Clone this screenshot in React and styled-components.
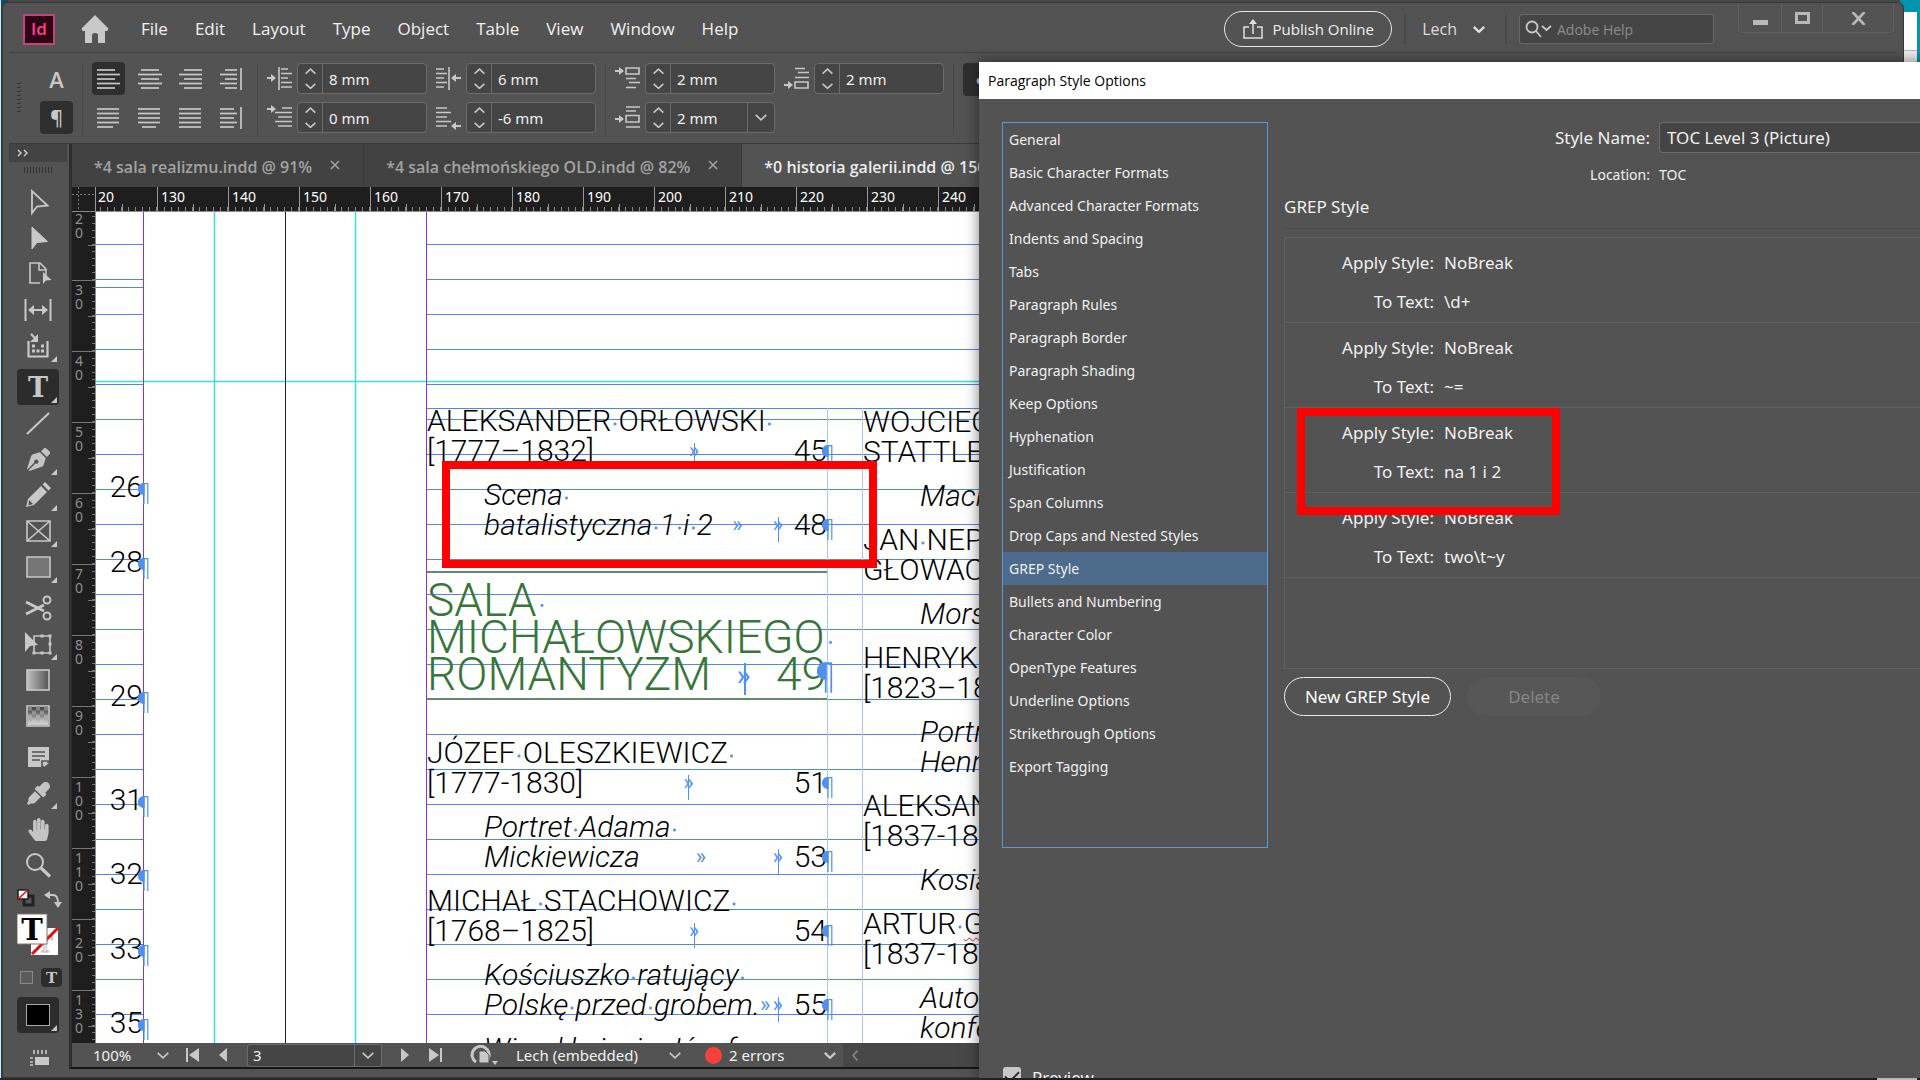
import React from "react";
import styled, { createGlobalStyle } from "styled-components";
import { FaEyeDropper, FaHandPaper, FaPenNib } from "react-icons/fa";

const GlobalStyle = createGlobalStyle`
  * {
    box-sizing: border-box;
  }

  body {
    margin: 0;
    overflow: hidden;
    background: #0e5a70;
    font-family: "Open Sans", "Noto Sans", sans-serif;
    color: #f0f0f0;
  }

  button,
  input {
    font: inherit;
    color: inherit;
    background: none;
    border: 0;
    padding: 0;
    margin: 0;
  }
`;

const Desktop = styled.div`
  position: relative;
  height: 100vh;
  display: flex;
  overflow: hidden;
  padding: 2px 16px 2px 2px;
  background: linear-gradient(90deg, transparent 8px, #484848 8px, #484848 calc(100% - 20px), transparent 0) 0 0 / 100% 2px no-repeat,
    linear-gradient(#2a2a2a, #2a2a2a) 0 100% / 100% 2px no-repeat,
    linear-gradient(90deg, #d8e4e8 1px, #14485c 1px, #14485c 50%, #0294ad 50%);
`;

// Strip of the window that sits behind the main one
const BackWindow = styled.div`
  position: absolute;
  top: 12px;
  right: 3px;
  width: 40px;
  bottom: 0;
  background: linear-gradient(#fff 38px, #bbb 38px, #bbb 39px, #eee 39px);
`;

const AppWindow = styled.div`
  position: relative;
  flex: 1;
  min-width: 0;
  display: flex;
  flex-direction: column;
  background: #535353;
  border: 1px solid #383838;
  border-radius: 6px 6px 0 0;
  padding: 0 6px;
`;

// ---- Title bar ----

const TitleBar = styled.header`
  height: 50px;
  flex-shrink: 0;
  display: flex;
  align-items: center;
  padding: 3px 0 0 14px;
  border-bottom: 1px solid #404040;
`;

const Logo = styled.div`
  width: 32px;
  height: 31px;
  border: 2px solid #c0457c;
  background: #2f0515;
  color: #ff3f94;
  font-weight: 600;
  font-size: 17px;
  line-height: 25px;
  text-align: center;
  margin-right: 26px;
`;

const Menu = styled.nav`
  display: flex;
  gap: 27px;
  margin-left: 32px;
  flex: 1;
`;

const MenuItem = styled.button`
  font-size: 17px;
  line-height: 24px;
`;

const PublishButton = styled.button`
  display: flex;
  align-items: center;
  justify-content: center;
  gap: 10px;
  width: 168px;
  height: 36px;
  border: 1px solid #e8e8e8;
  border-radius: 18px;
  font-size: 15px;
  white-space: nowrap;
`;

const BarDivider = styled.span`
  width: 2px;
  height: 30px;
  background: #4a4a4a;
  margin: 0 ${(p) => p.$after || 12}px 0 12px;
`;

const UserButton = styled.button`
  display: flex;
  align-items: center;
  gap: 16px;
  font-size: 16px;
  color: #dcdcdc;
  margin-right: 8px;
`;

const SearchBox = styled.label`
  display: flex;
  align-items: center;
  width: 195px;
  height: 30px;
  border: 1px solid #6a6a6a;
  border-radius: 3px;
  background: #454545;
  padding-left: 5px;
  gap: 4px;

  input {
    width: 140px;
    font-size: 14px;
  }

  input::placeholder {
    color: #8c8c8c;
  }
`;

const WindowButtons = styled.div`
  align-self: flex-start;
  display: flex;
  height: 29px;
  margin: -2px 3px 0 24px;
  border: 1px solid #5f5f5f;
  border-top: 0;
  border-radius: 0 0 4px 4px;
`;

const WindowButton = styled.button`
  width: ${(p) => p.$width}px;
  display: flex;
  align-items: center;
  justify-content: center;

  & + & {
    border-left: 1px solid #5f5f5f;
  }
`;

// ---- Control bar ----

const ControlBar = styled.div`
  height: 91px;
  flex-shrink: 0;
  display: flex;
  align-items: flex-start;
  padding: 10px 0 0 8px;
  border-bottom: 1px solid #3c3c3c;
`;

const Gripper = styled.span`
  width: 4px;
  height: 30px;
  margin: 20px 19px 0 0;
  background: repeating-linear-gradient(#333 0 1px, transparent 1px 4px);
`;

const ControlGrid = styled.div`
  display: grid;
  grid-template-columns: repeat(${(p) => p.$columns}, auto);
  grid-auto-rows: 31px;
  row-gap: 8px;
  column-gap: ${(p) => p.$gap || 0}px;
  align-items: center;
`;

const ControlDivider = styled.span`
  width: 1px;
  height: 72px;
  background: #4a4a4a;
  margin: 0 9px;
`;

const IconButton = styled.button`
  width: 33px;
  height: 33px;
  display: flex;
  align-items: center;
  justify-content: center;
  border-radius: 4px;
  font-size: ${(p) => p.$size || 22}px;
  font-weight: 600;
  line-height: 1;
  color: #c8c8c8;
  background: ${(p) => (p.$active ? "#2f2f2f" : "transparent")};
`;

const FieldGroup = styled.div`
  display: flex;
  align-items: center;
  gap: 5px;

  label {
    display: flex;
  }
`;

const FieldBox = styled.div`
  display: flex;
  width: 130px;
  height: 31px;
  border: 1px solid #6c6c6c;
  border-radius: 4px;
  background: #454545;

  input {
    flex: 1;
    min-width: 0;
    padding-left: 6px;
    font-size: 15px;
    font-family: "Noto Sans", sans-serif;
  }
`;

const Spinner = styled.div`
  width: 25px;
  display: flex;
  flex-direction: column;
  border-right: 1px solid #6c6c6c;

  button {
    flex: 1;
    display: flex;
    align-items: center;
    justify-content: center;
  }
`;

const DropButton = styled.button`
  width: 27px;
  display: flex;
  align-items: center;
  justify-content: center;
  border-left: 1px solid #6c6c6c;
`;

// ---- Work area ----

const WorkArea = styled.div`
  flex: 1;
  min-height: 0;
  display: flex;
`;

const ToolPanel = styled.aside`
  width: 58px;
  display: flex;
  flex-direction: column;
  align-items: center;
  color: #c4c4c4;
`;

const ToolPanelHeader = styled.div`
  width: 100%;
  height: 18px;
  padding-left: 8px;
  display: flex;
  align-items: center;
  background: #434343;
  flex-shrink: 0;
`;

const ToolGripper = styled.span`
  width: 28px;
  height: 6px;
  margin: 5px 0 11px;
  flex-shrink: 0;
  background: repeating-linear-gradient(90deg, #333 0 1px, transparent 1px 3px);
`;

const ToolGroup = styled.div`
  display: flex;
  flex-direction: column;
  margin-bottom: 5px;
`;

const Tool = styled.button`
  position: relative;
  width: 42px;
  height: 36px;
  flex-shrink: 0;
  display: flex;
  align-items: center;
  justify-content: center;
  border-radius: 4px;
  background: ${(p) => (p.$active ? "#2c2c2c" : "transparent")};

  &::after {
    content: "";
    display: ${(p) => (p.$more ? "block" : "none")};
    position: absolute;
    right: 2px;
    bottom: 2px;
    border: 3px solid #c8c8c8;
    border-top-color: transparent;
    border-left-color: transparent;
  }
`;

const SwatchButton = styled.button`
  display: flex;
  flex-shrink: 0;
  margin: 1px 0 0 3px;
`;

const FormatRow = styled.div`
  display: flex;
  align-items: center;
  gap: 8px;
  margin: 13px 0 10px 6px;
`;

const FormatButton = styled.button`
  width: ${(p) => (p.$active ? 21 : 13)}px;
  height: ${(p) => (p.$active ? 19 : 13)}px;
  border: ${(p) => (p.$active ? "0" : "1px solid #8a8a8a")};
  border-radius: ${(p) => (p.$active ? 4 : 0)}px;
  background: ${(p) => (p.$active ? "#2c2c2c" : "#5c5c5c")};
  font: bold 15px/18px "DejaVu Serif", serif;
`;

const ScreenMode = styled.button`
  display: flex;
  margin: 17px 0 0 3px;
`;

const BlackSwatch = styled.span`
  width: 24px;
  height: 22px;
  border: 1px solid #aaa;
  background: #000;
`;

const Document = styled.main`
  flex: 1;
  min-width: 0;
  display: flex;
  flex-direction: column;
  margin-left: 2px;
  margin-bottom: 8px;
  border-left: 3px solid #2e2e2e;
  border-bottom: 2px solid #161616;
`;

const TabStrip = styled.div`
  display: flex;
  height: 43px;
  flex-shrink: 0;
  background: #424242;
`;

const Tab = styled.div`
  display: flex;
  align-items: center;
  flex: ${(p) => (p.$active ? "1" : "none")};
  gap: 18px;
  padding: 2px 23px 0 22px;
  border-right: 1px solid #3a3a3a;
  background: ${(p) => (p.$active ? "#535353" : "#424242")};
  color: ${(p) => (p.$active ? "#ececec" : "#a2a2a2")};
  font-size: 16px;
  font-weight: 600;
  white-space: nowrap;

  button {
    display: flex;
    padding-bottom: 4px;
  }
`;

const RulerRow = styled.div`
  display: flex;
  height: 25px;
  flex-shrink: 0;
  background: #1e1e1e;
  border-bottom: 1px solid #8a8a8a;
`;

const RulerCorner = styled.div`
  width: 24px;
  flex-shrink: 0;
  background: linear-gradient(90deg, #777 50%, transparent 50%) 0 7px / 4px 1px repeat-x,
    linear-gradient(#777 50%, transparent 50%) 6px 0 / 1px 4px repeat-y;
  border-right: 1px solid #999;
`;

const RulerStrip = styled.div`
  flex: 1;
  min-width: 0;
  display: flex;
  overflow: hidden;
`;

const RulerMark = styled.span`
  width: 71px;
  flex-shrink: 0;
  border-left: 1px solid #999;
  padding-left: 3px;
  font: 14px/20px "Noto Sans", sans-serif;
  color: #fff;
  background: linear-gradient(90deg, transparent 6px, #888 6px) 0 100% / 7px 4px repeat-x,
    linear-gradient(#999, #999) 35px 100% / 1px 7px no-repeat;

  &:first-child {
    margin-left: -10px;
  }
`;

const CanvasRow = styled.div`
  flex: 1;
  min-height: 0;
  display: flex;
`;

const SideRuler = styled.div`
  width: 24px;
  flex-shrink: 0;
  overflow: hidden;
  background: #1e1e1e;
  border-right: 1px solid #8a8a8a;
`;

const SideMark = styled.div`
  height: 71px;
  border-top: 1px solid #777;
  padding: 2px 0 0 3px;
  font: 14px/14px "Noto Sans", sans-serif;
  color: #909090;
  background: linear-gradient(transparent 6px, #777 6px) 100% 0 / 3px 7px repeat-y,
    linear-gradient(#777, #777) 100% 35px / 7px 1px no-repeat;

  &:first-child {
    margin-top: -3px;
  }

  span {
    display: block;
    width: 9px;
  }
`;

// Pasteboard: guides, text frames and marks keep their place on the spread
const Canvas = styled.div`
  position: relative;
  flex: 1;
  min-width: 0;
  overflow: hidden;
  background: #fff;
  color: #000;
`;

const Guides = styled.svg`
  position: absolute;
  inset: 0;
  width: 100%;
  height: 100%;
`;

const TextFrame = styled.section`
  position: absolute;
  left: ${(p) => p.$left}px;
  top: ${(p) => p.$top}px;
  width: ${(p) => p.$width}px;
  display: flex;
  flex-direction: column;
  font-family: Roboto, sans-serif;
  font-weight: 300;
  font-size: 30px;
  line-height: 30px;
  white-space: pre;
`;

const Entry = styled.p`
  margin: 0 0 14px;
  padding-left: ${(p) => (p.$picture ? 57 : 0)}px;
  font-style: ${(p) => (p.$picture ? "italic" : "normal")};
`;

const Room = styled.h2`
  margin: 17px 0 38px;
  padding: 9px 0 5px;
  border: solid #5f8a6c;
  border-width: 2px 0;
  color: #37753b;
  font-size: 46px;
  font-weight: 300;
  line-height: 37px;
`;

const Line = styled.span`
  display: flex;
`;

const Dot = styled.span`
  background: radial-gradient(circle at 50% 60%, #5b93e6 1px, transparent 2px);
`;

const TabMark = styled.span`
  position: relative;
  min-width: 0;
  width: ${(p) => (p.$wide ? "auto" : "32px")};
  flex: ${(p) => (p.$wide ? "1" : "none")};
  text-align: center;
  color: #4f90f0;
  font-style: normal;
  font-weight: 400;
  font-size: ${(p) => (p.$large ? 30 : 22)}px;

  &::after {
    content: "";
    display: ${(p) => (p.$bar ? "block" : "none")};
    position: absolute;
    left: 50%;
    top: 7px;
    bottom: -2px;
    width: ${(p) => (p.$large ? 2 : 1)}px;
    background: #4f90f0;
  }
`;

const PageNumber = styled.span`
  position: relative;
  font-style: normal;

  svg {
    position: absolute;
    right: -6px;
    bottom: 0;
  }
`;

const FolioNumber = styled.p`
  margin: 0 0 ${(p) => p.$after}px;
  text-align: right;
`;

const Misspelt = styled.span`
  text-decoration: underline wavy #e02020 1px;
  text-underline-offset: 3px;
`;

const RedFrame = styled.div`
  position: absolute;
  left: ${(p) => p.$left}px;
  top: ${(p) => p.$top}px;
  width: ${(p) => p.$width}px;
  height: ${(p) => p.$height}px;
  border: 8px solid #fe0000;
  pointer-events: none;
`;

const StatusBar = styled.footer`
  height: 24px;
  flex-shrink: 0;
  display: flex;
  align-items: center;
  padding-left: 21px;
  font: 15px/24px "Noto Sans", sans-serif;

  button {
    display: flex;
    align-items: center;
    justify-content: center;
  }
`;

const StatusItem = styled.span`
  display: flex;
  align-items: center;
  gap: 7px;
  width: ${(p) => p.$width}px;
  white-space: nowrap;
`;

const StatusButton = styled.button`
  width: ${(p) => p.$width}px;
`;

const PageField = styled.div`
  display: flex;
  width: 135px;
  height: 23px;
  margin: 0 10px 0 18px;
  border: 1px solid #6c6c6c;
  border-radius: 3px;
  background: #454545;

  input {
    flex: 1;
    min-width: 0;
    padding-left: 5px;
  }
`;

const ErrorDot = styled.span`
  width: 17px;
  height: 17px;
  margin-left: 24px;
  border-radius: 50%;
  background: #f8403c;
`;

const StatusScroll = styled.div`
  flex: 1;
  height: 100%;
  display: flex;
  align-items: center;
  margin-left: 7px;
  padding-left: 9px;
  background: #484848;
`;

// ---- Dialog ----

const Dialog = styled.section`
  position: absolute;
  left: 979px;
  right: 0;
  top: 62px;
  bottom: 2px;
  display: flex;
  flex-direction: column;
  overflow: hidden;
  background: #535353;
  font-family: "Noto Sans", sans-serif;
`;

const DialogShadow = styled.div`
  position: absolute;
  left: 979px;
  right: -20px;
  top: 62px;
  bottom: 2px;
  box-shadow: 0 0 14px rgba(0, 0, 0, 0.5);
`;

const DialogTitle = styled.h1`
  margin: 0;
  height: 37px;
  flex-shrink: 0;
  padding-left: 9px;
  background: #fff;
  color: #000;
  font: 400 14px/38px "Open Sans", sans-serif;
`;

const DialogBody = styled.div`
  flex: 1;
  min-height: 0;
  display: flex;
  align-items: flex-start;
  gap: 16px;
  padding: 23px 0 0 23px;
`;

const CategoryList = styled.ul`
  width: 266px;
  height: 726px;
  flex-shrink: 0;
  margin: 0;
  padding: 0;
  list-style: none;
  border: 1px solid #5b9bd5;
`;

const Category = styled.button`
  display: block;
  width: 100%;
  height: 33px;
  padding-left: 6px;
  text-align: left;
  font-size: 14px;
  white-space: nowrap;
  background: ${(p) => (p.$active ? "#4d6b8a" : "transparent")};
`;

const StylePane = styled.div`
  flex: 1;
  min-width: 0;
  font-size: 17px;
`;

const StyleHead = styled.div`
  display: grid;
  grid-template-columns: 366px 1fr;
  column-gap: 9px;
  align-items: center;

  label {
    text-align: right;
  }
`;

const NameInput = styled.input`
  width: 100%;
  height: 31px;
  padding-left: 7px;
  border: 1px solid #6c6c6c;
  border-right: 0;
  border-radius: 4px 0 0 4px;
  background: #454545;
`;

const Small = styled.span`
  font-size: 14px;
  line-height: 43px;
  text-align: ${(p) => p.$align || "left"};
`;

const PaneTitle = styled.h2`
  margin: 0;
  height: 33px;
  font-size: 17px;
  font-weight: 400;
  line-height: 22px;
  border-bottom: 1px solid #4c4c4c;
`;

const GrepList = styled.div`
  height: 432px;
  margin: 8px 0;
  border: 1px solid #5f5f5f;
  border-right: 0;
`;

const GrepRow = styled.dl`
  display: grid;
  grid-template-columns: 149px 1fr;
  grid-auto-rows: 39px;
  column-gap: 10px;
  margin: 0;
  padding: 5px 0 1px;
  border-bottom: 1px solid #5f5f5f;
  line-height: 39px;

  dt {
    text-align: right;
  }

  dd {
    margin: 0;
  }
`;

const ButtonRow = styled.div`
  display: flex;
  gap: 16px;
`;

const PillButton = styled.button`
  width: ${(p) => p.$width}px;
  height: 39px;
  border-radius: 20px;
  border: 1px solid ${(p) => (p.disabled ? "#575757" : "#ececec")};
  background: ${(p) => (p.disabled ? "#575757" : "transparent")};
  color: ${(p) => (p.disabled ? "#858585" : "#fff")};
`;

const DialogFooter = styled.div`
  display: flex;
  align-items: flex-start;
  gap: 11px;
  height: 12px;
  padding-left: 24px;
  font-size: 17px;
  line-height: 24px;

  input {
    appearance: none;
    width: 18px;
    height: 18px;
    border-radius: 3px;
    background: #c8c8c8;
    flex-shrink: 0;
    display: flex;
    justify-content: center;
    margin-top: 1px;
  }

  input::after {
    content: "";
    width: 6px;
    height: 12px;
    margin-top: 1px;
    border: solid #333;
    border-width: 0 2px 2px 0;
    transform: rotate(45deg);
  }
`;

// ---- Icons ----

const Chevron = ({ up, left, size = 11, color = "#c8c8c8", width = 1.4 }) => (
  <svg
    width={left ? size / 2 + 1 : size}
    height={left ? size : size / 2 + 1}
    viewBox={left ? "0 0 6 10" : "0 0 10 6"}
    fill="none"
    stroke={color}
    strokeWidth={width}
  >
    <path d={left ? "M5 .5L1 5l4 4.500" : up ? "M.5 5.200L5 1l4.500 4.200" : "M.5 .8L5 5l4.500-4.200"} />
  </svg>
);

const Cross = ({ size = 10 }) => (
  <svg width={size} height={size} viewBox="0 0 10 10" stroke="currentColor" strokeWidth="1.6">
    <path d="M1 1l8 8M9 1L1 9" />
  </svg>
);

// Each pair is the start and end of one stroke, top to bottom
const lines = {
  left: [[0, 18], [0, 23], [0, 18], [0, 23], [0, 18]],
  center: [[3, 21], [0, 24], [3, 21], [0, 24], [3, 21]],
  right: [[5, 23], [0, 23], [5, 23], [0, 23], [5, 23]],
  spine: [[5, 17], [0, 17], [5, 17], [0, 17], [5, 17]],
  justLeft: [[0, 22], [0, 22], [0, 22], [0, 22], [0, 16]],
  justCenter: [[0, 22], [0, 22], [0, 22], [0, 22], [4, 18]],
  justAll: [[0, 22], [0, 22], [0, 22], [0, 22], [0, 22]],
  awaySpine: [[0, 14], [0, 17], [0, 14], [0, 17], [0, 14]],
};

const AlignIcon = ({ kind }) => (
  <svg width="24" height="24" viewBox="0 0 24 24" stroke="#c8c8c8" strokeWidth="1.7">
    {lines[kind].map(([a, b], i) => (
      <path key={i} d={`M${a} ${3 + i * 4.5}H${b}`} />
    ))}
    {kind.toLowerCase().includes("spine") && <path d="M21 1v22" />}
  </svg>
);

// Whether the small arrow points left, and the height it sits at
const arrows = {
  left: [0, 12],
  right: [1, 12],
  first: [0, 4],
  last: [1, 21],
  before: [0, 5],
  after: [0, 19],
  between: [0, 14],
};

const indentPaths = {
  left: "M12 1v23M14 3h7M14 7.500h11M14 12h7M14 16.500h11M14 21h11",
  right: "M13 1v23M0 3h8M0 7.500h11M0 12h8M0 16.500h11M0 21h8",
  first: "M15 3h10M8 7.500h17M11 12h14M8 16.500h17M11 21h14",
  last: "M0 3h11M0 7.500h15M0 12h11M0 16.500h15M0 21h11",
  before: "M11 2h13v6H11zM11 12.500h10M14 16.500h11M11 21.500h10",
  after: "M11 16h13v6H11zM11 2.500h10M14 6.500h11M11 11.500h14",
  between: "M11 10.500h13v6.500H11zM11 2h14M11 6h10M11 22h14",
};

const IndentIcon = ({ kind }) => {
  const [flip, y] = arrows[kind];
  return (
    <svg width="25" height="25" viewBox="0 0 25 25" fill="none" stroke="#c8c8c8" strokeWidth="1.6">
      <path d={indentPaths[kind]} />
      <path d={flip ? `M25 ${y}h-5` : `M0 ${y}h5`} strokeWidth="2" />
      <path d={flip ? `M20 ${y - 4}l-5 4 5 4z` : `M4 ${y - 4}l5 4-5 4z`} fill="#c8c8c8" stroke="none" />
    </svg>
  );
};

const Stroke = ({ d, fill = "none", width = 2, children }) => (
  <svg width="30" height="28" viewBox="0 0 30 28" fill={fill} stroke="#c8c8c8" strokeWidth={width}>
    {d && <path d={d} />}
    {children}
  </svg>
);

const tools = [
  [
    { name: "Selection", icon: <Stroke d="M9 3v22l5-6.500 10.500-1z" width="1.8" /> },
    { name: "Direct Selection", icon: <Stroke d="M9 3v22l5-6.500 10.500-1z" fill="#c8c8c8" width="1" /> },
    {
      name: "Page",
      icon: (
        <Stroke d="M17 23H7V3h10l6 6v6M16 3v7h7" width="1.6">
          <path d="M20 12v12l3-3.500 5.500-.5z" fill="#c8c8c8" stroke="none" />
        </Stroke>
      ),
    },
    {
      name: "Gap",
      icon: (
        <Stroke d="M2.500 3v22M27.500 3v22M7 14h16">
          <path d="M5 14l6-5v10zM25 14l-6-5v10z" fill="#c8c8c8" stroke="none" />
        </Stroke>
      ),
    },
    {
      name: "Content Collector",
      more: true,
      icon: (
        <Stroke d="M5.500 9v15.500h19V9M8 2l5 5" width="2.2">
          <path d="M15 2v8H7z" fill="#c8c8c8" stroke="none" />
          <path d="M9 14h3M18 14h3M9 19h3M13.500 19h3M18 19h3" strokeWidth="3" />
        </Stroke>
      ),
    },
  ],
  [
    {
      name: "Type",
      more: true,
      active: true,
      icon: (
        <Stroke>
          <text x="15" y="24" textAnchor="middle" fill="#c8c8c8" stroke="none" fontFamily="DejaVu Serif" fontWeight="bold" fontSize="27">
            T
          </text>
        </Stroke>
      ),
    },
    { name: "Line", icon: <Stroke d="M4 25L26 4" /> },
    { name: "Pen", more: true, icon: <FaPenNib size={23} /> },
    {
      name: "Pencil",
      more: true,
      icon: (
        <Stroke>
          <path d="M3 26l2-8L18 5l6 6-13 13zM19.500 3.500l2.500-2.500 6 6-2.500 2.500z" fill="#c8c8c8" stroke="none" />
          <path d="M6 19l4 4-4.500 1.500z" fill="#535353" stroke="none" />
        </Stroke>
      ),
    },
    { name: "Rectangle Frame", more: true, icon: <Stroke d="M4 4h23v20H4zM4 4l23 20M27 4L4 24" width="1.6" /> },
    { name: "Rectangle", more: true, icon: <Stroke d="M4 4h23v20H4z" fill="#767676" width="1.6" /> },
  ],
  [
    {
      name: "Scissors",
      icon: (
        <Stroke d="M3 8l18 9M3 20l18-9" width="2.600">
          <circle cx="24" cy="6" r="3.500" strokeWidth="2" />
          <circle cx="24" cy="22" r="3.500" strokeWidth="2" />
        </Stroke>
      ),
    },
    {
      name: "Free Transform",
      more: true,
      icon: (
        <Stroke d="M11 6h16v17H11z" width="1.6">
          <path d="M2 2v20l5-6 8-1z" fill="#c8c8c8" stroke="none" />
          <path d="M17.500 6h3M25.500 6h3M25.500 14h3M25.500 23h3M17.500 23h3M9.500 23h3" strokeWidth="3" />
        </Stroke>
      ),
    },
    {
      name: "Gradient Swatch",
      icon: (
        <Stroke>
          <defs>
            <linearGradient id="swatch">
              <stop offset="0" stopColor="#c0c0c0" />
              <stop offset="1" stopColor="#555" />
            </linearGradient>
          </defs>
          <rect x="4" y="4" width="22" height="20" fill="url(#swatch)" strokeWidth="1.6" />
        </Stroke>
      ),
    },
    {
      name: "Gradient Feather",
      icon: (
        <Stroke>
          <defs>
            <linearGradient id="feather" x2="0" y2="1">
              <stop offset="0.1" stopColor="#ccc" stopOpacity="0" />
              <stop offset="0.9" stopColor="#ccc" />
            </linearGradient>
          </defs>
          <rect x="4" y="4" width="22" height="20" fill="#484848" strokeWidth="1.6" />
          <path
            d="M5 6.500h4M13 6.500h4M21 6.500h4M9 10.500h4M17 10.500h4M5 14.500h4M13 14.500h4M21 14.500h4M9 18.500h4M17 18.500h4"
            stroke="#808080"
            strokeWidth="4"
          />
          <rect x="5" y="5" width="20" height="18" fill="url(#feather)" stroke="none" />
        </Stroke>
      ),
    },
  ],
  [
    {
      name: "Note",
      icon: (
        <Stroke>
          <path d="M5 4h21v14l-7 6H5z" fill="#c8c8c8" stroke="none" />
          <path d="M9 9h13M9 13h13M9 17h8M19 24v-6h7" stroke="#535353" strokeWidth="1.6" />
          <path d="M21 24v-4h5z" fill="#c8c8c8" stroke="none" />
        </Stroke>
      ),
    },
    {
      name: "Eyedropper",
      more: true,
      icon: <FaEyeDropper size={23} />,
    },
    { name: "Hand", icon: <FaHandPaper size={23} /> },
    {
      name: "Zoom",
      icon: (
        <Stroke>
          <circle cx="12" cy="11" r="8" />
          <path d="M18 17l9 8.500" strokeWidth="3.200" />
        </Stroke>
      ),
    },
  ],
];

const FillStroke = () => (
  <svg width="46" height="66" viewBox="0 0 46 66" fill="none">
    <rect x="7" y="7" width="9" height="9" stroke="#222" strokeWidth="3" />
    <rect x="1" y="1" width="10" height="9" fill="#fff" stroke="#222" strokeWidth="1.5" />
    <path d="M1 10L11 1" stroke="#e01010" strokeWidth="1.6" />
    <path d="M32 6h4q5 0 5 8" stroke="#c8c8c8" strokeWidth="1.8" />
    <path d="M27 6l6-4v8zM41 19l-4-6h8z" fill="#c8c8c8" />
    <rect x="14" y="39" width="27" height="27" fill="#fff" />
    <text x="28" y="63" textAnchor="middle" fontFamily="DejaVu Serif" fontSize="23" stroke="#bbb" strokeWidth="1">
      T
    </text>
    <path d="M15 65L41 39" stroke="#e01010" strokeWidth="3" />
    <rect x="0" y="25" width="30" height="30" fill="#fff" stroke="#777" />
    <text x="15" y="51" textAnchor="middle" fontFamily="DejaVu Serif" fontWeight="bold" fontSize="29" fill="#000">
      T
    </text>
  </svg>
);

const Pilcrow = ({ large }) => (
  <svg width={large ? 16 : 11} height={large ? 31 : 21} viewBox="0 0 11 21" fill="none" stroke="#4f90f0" strokeWidth="1.2">
    <path d="M6 .5A5.500 5.500 0 0 0 6 11.500z" fill="#4f90f0" />
    <path d="M5.500 .6H10.400M6 .5V21M9.800 .5V21" />
  </svg>
);

// ---- Data ----

const menus = ["File", "Edit", "Layout", "Type", "Object", "Table", "View", "Window", "Help"];

const topMarks = Array.from({ length: 26 }, (_, i) => 120 + i * 10);
const sideMarks = Array.from({ length: 12 }, (_, i) => 20 + i * 10);

const folios = [
  { page: 26, after: 45 },
  { page: 28, after: 104 },
  { page: 29, after: 74 },
  { page: 31, after: 44 },
  { page: 32, after: 45 },
  { page: 33, after: 44 },
  { page: 35, after: 0 },
];

const categories = [
  "General",
  "Basic Character Formats",
  "Advanced Character Formats",
  "Indents and Spacing",
  "Tabs",
  "Paragraph Rules",
  "Paragraph Border",
  "Paragraph Shading",
  "Keep Options",
  "Hyphenation",
  "Justification",
  "Span Columns",
  "Drop Caps and Nested Styles",
  "GREP Style",
  "Bullets and Numbering",
  "Character Color",
  "OpenType Features",
  "Underline Options",
  "Strikethrough Options",
  "Export Tagging",
];

const grepStyles = ["\\d+", "~=", "na 1 i 2", "two\\t~y"];

// ---- Components ----

// Text with the hidden space characters shown as dots
const Hidden = ({ children }) =>
  children.split(/( )/).map((part, i) => (part === " " ? <Dot key={i}> </Dot> : part));

const TocLine = ({ text, page, picture, large }) => (
  <Line>
    <span>
      <Hidden>{text}</Hidden>
    </span>
    {page && (
      <>
        <TabMark $wide $bar={!picture} $large={large}>
          »
        </TabMark>
        {picture && <TabMark $bar>»</TabMark>}
        <PageNumber>
          {page}
          <Pilcrow large={large} />
        </PageNumber>
      </>
    )}
  </Line>
);

const TocEntry = ({ first, second, page, picture }) => (
  <Entry $picture={picture}>
    <TocLine text={first} />
    {second && <TocLine text={second} page={page} picture={picture} />}
  </Entry>
);

const MeasureField = ({ id, label, icon, value, drop }) => (
  <FieldGroup>
    <label htmlFor={id} title={label}>
      <IndentIcon kind={icon} />
    </label>
    <FieldBox>
      <Spinner>
        <button aria-label={`Increase ${label}`}>
          <Chevron up />
        </button>
        <button aria-label={`Decrease ${label}`}>
          <Chevron />
        </button>
      </Spinner>
      <input id={id} aria-label={label} defaultValue={value} />
      {drop && (
        <DropButton aria-label={`${label} presets`}>
          <Chevron size={12} />
        </DropButton>
      )}
    </FieldBox>
  </FieldGroup>
);

const TopBar = () => (
  <TitleBar>
    <Logo>Id</Logo>
    <svg width="28" height="28" viewBox="0 0 28 28" fill="#c8c8c8">
      <path d="M14 0l13 13q1 3-2 3h-1v12h-7v-8q0-2-3-2t-3 2v8H4V16H3q-3 0-2-3z" />
    </svg>
    <Menu>
      {menus.map((item) => (
        <MenuItem key={item}>{item}</MenuItem>
      ))}
    </Menu>
    <PublishButton>
      <svg width="20" height="20" viewBox="0 0 20 20" fill="none" stroke="#e0e0e0" strokeWidth="1.5">
        <path d="M6 8H1v11h18V8h-5M10 15V3" />
        <path d="M10 0l4 5H6z" fill="#e0e0e0" stroke="none" />
      </svg>
      Publish Online
    </PublishButton>
    <BarDivider $after={16} />
    <UserButton>
      Lech
      <Chevron size={12} width={2} color="#e0e0e0" />
    </UserButton>
    <BarDivider />
    <SearchBox>
      <svg width="28" height="20" viewBox="0 0 28 20" fill="none" stroke="#c8c8c8" strokeWidth="1.8">
        <circle cx="7" cy="8" r="5.500" />
        <path d="M11 12l5 6M17 7l4.500 4L26 7" />
      </svg>
      <input placeholder="Adobe Help" aria-label="Adobe Help" />
    </SearchBox>
    <WindowButtons>
      <WindowButton $width={42} aria-label="Minimize">
        <svg width="15" height="14">
          <path d="M0 11.500h15" stroke="#b8b8b8" strokeWidth="5" />
        </svg>
      </WindowButton>
      <WindowButton $width={41} aria-label="Maximize">
        <svg width="15" height="12" fill="none" stroke="#b8b8b8" strokeWidth="3">
          <path d="M1.500 1.500h12v9h-12z" />
        </svg>
      </WindowButton>
      <WindowButton $width={71} aria-label="Close">
        <svg width="15" height="13" viewBox="0 0 15 13" stroke="#b8b8b8" strokeWidth="2.600">
          <path d="M1.500 0l12 13M13.500 0l-12 13" />
        </svg>
      </WindowButton>
    </WindowButtons>
  </TitleBar>
);

const Controls = () => (
  <ControlBar>
    <Gripper />
    <ControlGrid $columns={1}>
      <IconButton aria-label="Character">A</IconButton>
      <IconButton $active $size={20} aria-label="Paragraph">
        ¶
      </IconButton>
    </ControlGrid>
    <ControlDivider />
    <ControlGrid $columns={4} $gap={8}>
      {["left", "center", "right", "spine", "justLeft", "justCenter", "justAll", "awaySpine"].map((kind) => (
        <IconButton key={kind} $active={kind === "left"} aria-label={`Align ${kind}`}>
          <AlignIcon kind={kind} />
        </IconButton>
      ))}
    </ControlGrid>
    <ControlDivider />
    <ControlGrid $columns={2} $gap={9}>
      <MeasureField id="left" label="Left Indent" icon="left" value="8 mm" />
      <MeasureField id="right" label="Right Indent" icon="right" value="6 mm" />
      <MeasureField id="first" label="First Line Indent" icon="first" value="0 mm" />
      <MeasureField id="last" label="Last Line Indent" icon="last" value="-6 mm" />
    </ControlGrid>
    <ControlDivider />
    <ControlGrid $columns={2} $gap={9}>
      <MeasureField id="before" label="Space Before" icon="before" value="2 mm" />
      <MeasureField id="after" label="Space After" icon="after" value="2 mm" />
      <MeasureField id="between" label="Space Between" icon="between" value="2 mm" drop />
    </ControlGrid>
    <ControlDivider />
    <IconButton $active aria-label="Bulleted List">
      •
    </IconButton>
  </ControlBar>
);

const Tools = () => (
  <ToolPanel>
    <ToolPanelHeader>
      <svg width="12" height="8" viewBox="0 0 12 8" fill="none" stroke="#d0d0d0" strokeWidth="1.4">
        <path d="M1 1l3 3-3 3M7 1l3 3-3 3" />
      </svg>
    </ToolPanelHeader>
    <ToolGripper />
    {tools.map((group, i) => (
      <ToolGroup key={i}>
        {group.map((tool) => (
          <Tool key={tool.name} aria-label={tool.name} $active={tool.active} $more={tool.more}>
            {tool.icon}
          </Tool>
        ))}
      </ToolGroup>
    ))}
    <SwatchButton aria-label="Fill and Stroke">
      <FillStroke />
    </SwatchButton>
    <FormatRow>
      <FormatButton aria-label="Formatting affects container" />
      <FormatButton $active>T</FormatButton>
    </FormatRow>
    <Tool $active $more aria-label="Apply Color">
      <BlackSwatch />
    </Tool>
    <ScreenMode aria-label="Screen Mode">
      <svg width="20" height="16" viewBox="0 0 20 16" stroke="#c8c8c8" strokeWidth="1.6">
        <path d="M4 0v4M8 0v4M12 0v4M16 0v4M0 8h3M0 12h3M0 15h3" />
        <path d="M5 7h14v8H5z" fill="#c8c8c8" stroke="none" />
      </svg>
    </ScreenMode>
  </ToolPanel>
);

const Spread = () => (
  <Canvas>
    <Guides>
      <defs>
        <pattern id="baseline" width="35" height="35" y="32" patternUnits="userSpaceOnUse">
          <path d="M0 .5h35" stroke="#4f8ad8" />
        </pattern>
      </defs>
      <rect width="47" height="100%" fill="url(#baseline)" />
      <rect x="331" width="100%" height="100%" fill="url(#baseline)" />
      <g stroke="#4f8ad8">
        <path d="M0 75.500h47M331 196.500h1600" />
      </g>
      <path d="M731.500 196v900M766.500 196v900" stroke="#a9c8f0" />
      <path d="M0 169.500h1900" stroke="#35dfe0" strokeWidth="1.500" />
      <path d="M118.500 0v1000M259.500 0v1000" stroke="#35dfe0" strokeWidth="1.500" />
      <path d="M189.500 0v1000" stroke="#222" />
      <path d="M47.500 0v1000M330.500 0v1000" stroke="#8a35c8" />
    </Guides>

    <TextFrame $left={0} $top={260} $width={47}>
      {folios.map(({ page, after }) => (
        <FolioNumber key={page} $after={after}>
          <PageNumber>
            {page}
            <Pilcrow />
          </PageNumber>
        </FolioNumber>
      ))}
    </TextFrame>

    <TextFrame $left={331} $top={194} $width={400}>
      <TocEntry first="ALEKSANDER ORŁOWSKI " second="[1777–1832]" page="45" />
      <TocEntry picture first="Scena " second="batalistyczna 1 i 2" page="48" />
      <Room>
        <TocLine text="SALA " />
        <TocLine text="MICHAŁOWSKIEGO " />
        <TocLine large text="ROMANTYZM" page="49" />
      </Room>
      <TocEntry first="JÓZEF OLESZKIEWICZ " second="[1777-1830]" page="51" />
      <TocEntry picture first="Portret Adama " second="Mickiewicza" page="53" />
      <TocEntry first="MICHAŁ STACHOWICZ " second="[1768–1825]" page="54" />
      <TocEntry picture first="Kościuszko ratujący " second="Polskę przed grobem." page="55" />
      <TocEntry picture first="Wjazd księcia Józefa" />
    </TextFrame>

    <TextFrame $left={767} $top={195} $width={400}>
      <TocEntry first="WOJCIECH KORNELI " second="STATTLER" />
      <TocEntry picture first="Machabeusze" />
      <TocEntry first="JAN NEPOMUCEN " second="GŁOWACKI" />
      <TocEntry picture first="Morskie Oko" />
      <TocEntry first="HENRYK RODAKOWSKI " second="[1823–1894]" />
      <TocEntry picture first="Portret generała " second="Henryka" />
      <TocEntry first="ALEKSANDER KOTSIS " second="[1837-1877]" />
      <TocEntry picture first="Kosiarze" />
      <Entry>
        <Line>
          ARTUR<Dot> </Dot>
          <Misspelt>GROTTGER</Misspelt>
        </Line>
        <TocLine text="[1837-1867]" />
      </Entry>
      <TocEntry picture first="Autoportret " second="konfederat" />
    </TextFrame>
  </Canvas>
);

const Status = () => (
  <StatusBar>
    <StatusItem $width={64}>100%</StatusItem>
    <StatusButton $width={12} aria-label="Zoom level">
      <Chevron size={12} />
    </StatusButton>
    <StatusButton $width={48} aria-label="First page">
      <svg width="14" height="14" fill="#c8c8c8">
        <path d="M0 0h2v14H0zM13 0v14L3 7z" />
      </svg>
    </StatusButton>
    <StatusButton $width={12} aria-label="Previous page">
      <svg width="8" height="14" fill="#c8c8c8">
        <path d="M8 0v14L0 7z" />
      </svg>
    </StatusButton>
    <PageField>
      <input defaultValue="3" aria-label="Page" />
      <DropButton aria-label="Page list">
        <Chevron size={12} />
      </DropButton>
    </PageField>
    <StatusButton $width={26} aria-label="Next page">
      <svg width="8" height="14" fill="#c8c8c8">
        <path d="M0 0v14l8-7z" />
      </svg>
    </StatusButton>
    <StatusButton $width={34} aria-label="Last page">
      <svg width="14" height="14" fill="#c8c8c8">
        <path d="M12 0h2v14h-2zM1 0v14l10-7z" />
      </svg>
    </StatusButton>
    <StatusButton $width={64} aria-label="Open page">
      <svg width="28" height="20" viewBox="0 0 28 20" fill="none" stroke="#c8c8c8" strokeWidth="3">
        <path d="M6 17A8.500 8.500 0 1 1 18 14" />
        <path d="M9 6h6l4 4v8H9z" fill="#c8c8c8" stroke="#535353" strokeWidth="1" />
        <path d="M22 16h6l-3 4z" fill="#c8c8c8" stroke="none" />
      </svg>
    </StatusButton>
    <StatusItem $width={153}>Lech (embedded)</StatusItem>
    <StatusButton $width={12} aria-label="Preflight profile">
      <Chevron size={12} />
    </StatusButton>
    <StatusItem $width={143}>
      <ErrorDot />2 errors
    </StatusItem>
    <StatusButton $width={12} aria-label="Preflight menu">
      <Chevron size={12} width={2} />
    </StatusButton>
    <StatusScroll>
      <Chevron left size={11} color="#888" />
    </StatusScroll>
  </StatusBar>
);

const StyleOptions = () => (
  <Dialog role="dialog" aria-labelledby="dialog-title">
    <DialogTitle id="dialog-title">Paragraph Style Options</DialogTitle>
    <DialogBody>
      <CategoryList>
        {categories.map((name) => (
          <li key={name}>
            <Category $active={name === "GREP Style"}>{name}</Category>
          </li>
        ))}
      </CategoryList>
      <StylePane>
        <StyleHead>
          <label htmlFor="style-name">Style Name:</label>
          <NameInput id="style-name" defaultValue="TOC Level 3 (Picture)" />
          <Small $align="right">Location:</Small>
          <Small>TOC</Small>
        </StyleHead>
        <PaneTitle>GREP Style</PaneTitle>
        <GrepList>
          {grepStyles.map((text) => (
            <GrepRow key={text}>
              <dt>Apply Style:</dt>
              <dd>NoBreak</dd>
              <dt>To Text:</dt>
              <dd>{text}</dd>
            </GrepRow>
          ))}
        </GrepList>
        <ButtonRow>
          <PillButton $width={167}>New GREP Style</PillButton>
          <PillButton $width={134} disabled>
            Delete
          </PillButton>
        </ButtonRow>
      </StylePane>
    </DialogBody>
    <DialogFooter>
      <input type="checkbox" id="preview" defaultChecked />
      <label htmlFor="preview">Preview</label>
    </DialogFooter>
  </Dialog>
);

const App = () => (
  <>
    <GlobalStyle />
    <Desktop>
      <BackWindow />
      <AppWindow>
        <TopBar />
        <Controls />
        <WorkArea>
          <Tools />
          <Document>
            <TabStrip>
              <Tab>
                *4 sala realizmu.indd @ 91%
                <button aria-label="Close tab">
                  <Cross />
                </button>
              </Tab>
              <Tab>
                *4 sala chełmońskiego OLD.indd @ 82%
                <button aria-label="Close tab">
                  <Cross />
                </button>
              </Tab>
              <Tab $active>*0 historia galerii.indd @ 150%</Tab>
            </TabStrip>
            <RulerRow>
              <RulerCorner />
              <RulerStrip>
                {topMarks.map((mark) => (
                  <RulerMark key={mark}>{mark}</RulerMark>
                ))}
              </RulerStrip>
            </RulerRow>
            <CanvasRow>
              <SideRuler>
                {sideMarks.map((mark) => (
                  <SideMark key={mark}>
                    {String(mark)
                      .split("")
                      .map((digit, i) => (
                        <span key={i}>{digit}</span>
                      ))}
                  </SideMark>
                ))}
              </SideRuler>
              <Spread />
            </CanvasRow>
            <Status />
          </Document>
        </WorkArea>
      </AppWindow>
      <DialogShadow />
      <StyleOptions />
      <RedFrame $left={442} $top={461} $width={435} $height={107} />
      <RedFrame $left={1297} $top={408} $width={263} $height={107} />
    </Desktop>
  </>
);

export default App;
